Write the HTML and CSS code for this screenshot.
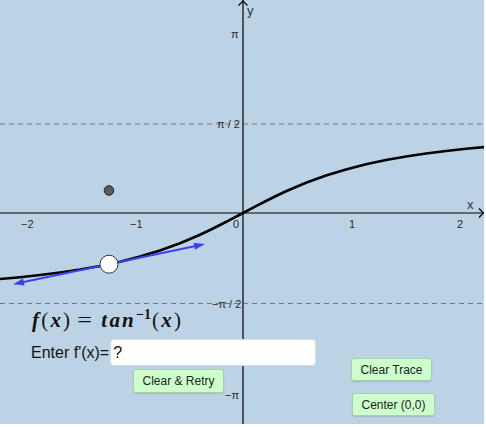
FILE: index.html
```html
<!DOCTYPE html>
<html>
<head>
<meta charset="utf-8">
<link rel="stylesheet" href="styles.css">
</head>
<body>
<div class="applet">
  <svg class="graph" width="484" height="424" viewBox="0 0 484 424">
    <line class="dash" x1="0" y1="124" x2="484" y2="124"/>
    <line class="dash" x1="0" y1="303.5" x2="484" y2="303.5"/>
    <line class="axis" x1="0" y1="213" x2="484" y2="213"/>
    <line class="axis" x1="243" y1="0" x2="243" y2="424"/>
    <polyline class="axis" points="479,208.5 483.5,213 479,217.5"/>
    <polyline class="axis" points="238.5,5.5 243,1 247.5,5.5"/>
    <text class="tick" x="21" y="228">−2</text>
    <text class="tick" x="130" y="228">−1</text>
    <text class="tick" x="233" y="228">0</text>
    <text class="tick" x="349" y="228">1</text>
    <text class="tick" x="457" y="228">2</text>
    <text class="tick" x="231" y="38">π</text>
    <text class="tick" x="217" y="128">π / 2</text>
    <text class="tick" x="212" y="307.5">−π / 2</text>
    <text class="tick" x="225" y="399">−π</text>
    <text class="lab" x="467" y="209">x</text>
    <text class="lab" x="247" y="15">y</text>
    <polyline class="curve" points="0,279.05 20,277.18 40,274.98 60,272.45 80,269.47 100,265.92 120,261.69 140,256.6 160,250.5 180,243.23 200,234.7 210,230 220,225.03 230,219.87 243,213 256,206.13 266,200.97 276,196 286,191.3 306,182.77 326,175.5 346,169.4 366,164.31 386,160.08 406,156.53 426,153.55 446,151.02 466,148.82 486,146.95"/>
    <line class="tangent" x1="20" y1="282.7" x2="198" y2="245.5"/>
    <polygon class="arrowhead" points="205,244 194.95,249.68 193.5,242.82"/>
    <polygon class="arrowhead" points="13,284.2 24.49,285.38 23.05,278.52"/>
    <circle class="gpoint" cx="109" cy="190.5" r="4.8"/>
    <circle class="wpoint" cx="109" cy="264.2" r="9"/>
  </svg>

  <div class="formula"><span class="mi">f</span><span class="mo">(</span><span class="mi">x</span><span class="mo">)</span><span class="eq">=</span><span class="mi">tan</span><sup class="sup">−1</sup><span class="mo">(</span><span class="mi">x</span><span class="mo">)</span></div>

  <div class="entry">
    <span class="entry-label">Enter f'(x)=</span>
    <div class="input">?</div>
  </div>

  <button class="btn btn-retry">Clear &amp; Retry</button>
  <button class="btn btn-trace">Clear Trace</button>
  <button class="btn btn-center">Center (0,0)</button>
</div>
</body>
</html>
```
FILE: styles.css
```css
html, body {
  margin: 0;
  padding: 0;
  background: #ffffff;
}
.applet {
  position: relative;
  width: 484px;
  height: 424px;
  background: #bcd3e6;
  overflow: hidden;
  font-family: "Liberation Sans", Arial, sans-serif;
}
.graph {
  position: absolute;
  left: 0;
  top: 0;
}
.dash {
  stroke: #737b82;
  stroke-width: 1;
  stroke-dasharray: 5 4;
}
.axis {
  stroke: #000;
  stroke-width: 1.2;
  fill: none;
}
.tick {
  font-family: "Liberation Sans", Arial, sans-serif;
  font-size: 11px;
  fill: #2a2a2a;
}
.lab {
  font-family: "Liberation Sans", Arial, sans-serif;
  font-size: 13px;
  fill: #333;
}
.curve {
  fill: none;
  stroke: #000;
  stroke-width: 2.6;
  stroke-linejoin: round;
}
.tangent {
  stroke: #3f3ff5;
  stroke-width: 2;
}
.arrowhead {
  fill: #3f3ff5;
}
.gpoint {
  fill: #5c5c5c;
  stroke: #222;
  stroke-width: 1;
}
.wpoint {
  fill: #ffffff;
  stroke: #333;
  stroke-width: 1;
}
.formula {
  position: absolute;
  left: 32px;
  top: 308px;
  font-family: "Liberation Serif", "Times New Roman", serif;
  font-size: 21px;
  font-weight: bold;
  color: #111;
  white-space: nowrap;
  line-height: 24px;
  letter-spacing: 2.2px;
}
.mi {
  font-style: italic;
}
.mo {
  font-weight: normal;
}
.eq {
  font-weight: normal;
  margin: 0 8px 0 7px;
  display: inline-block;
  transform: scaleX(1.25);
}
.sup {
  font-size: 14px;
  font-style: normal;
  vertical-align: 8px;
  line-height: 0;
  letter-spacing: 0;
  margin-right: 1px;
}
.entry {
  position: absolute;
  left: 31px;
  top: 339px;
  display: flex;
  align-items: center;
  height: 27px;
}
.entry-label {
  font-size: 16px;
  color: #111;
  margin-right: 1px;
}
.input {
  width: 202px;
  height: 25px;
  box-sizing: content-box;
  background: #fff;
  border: 1px solid #d6dde3;
  border-radius: 4px;
  font-size: 16px;
  line-height: 25px;
  padding-left: 2px;
  color: #111;
}
.btn {
  position: absolute;
  font-family: "Liberation Sans", Arial, sans-serif;
  font-size: 12px;
  color: #222;
  background: #ccffcc;
  border: 1px solid #a9cfa6;
  border-radius: 3px;
  box-shadow: 0 1px 1px rgba(0,0,0,0.12);
  padding: 0;
  margin: 0;
}
.btn-retry {
  left: 133px;
  top: 369px;
  width: 91px;
  height: 24px;
}
.btn-trace {
  left: 351px;
  top: 358px;
  width: 81px;
  height: 23px;
}
.btn-center {
  left: 352px;
  top: 393px;
  width: 83px;
  height: 23px;
}
```
